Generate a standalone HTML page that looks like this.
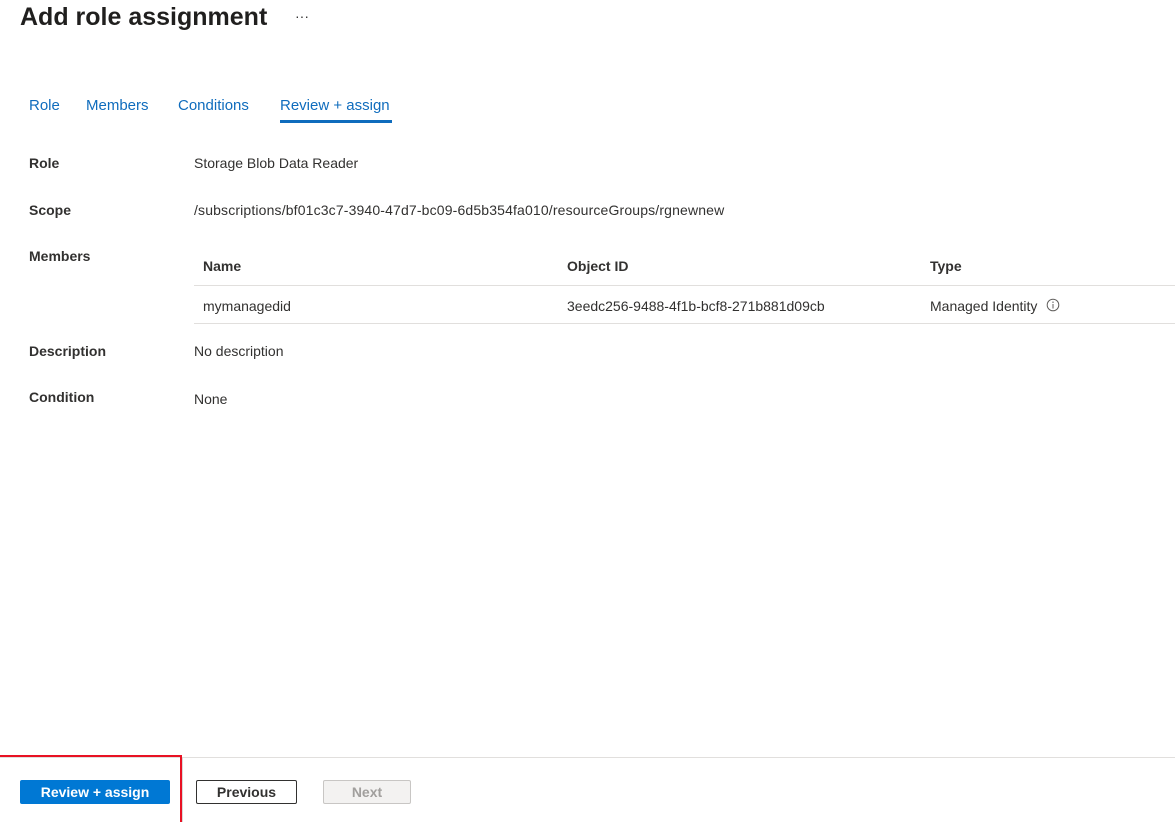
<!DOCTYPE html>
<html style="overflow:hidden;height:822px"><head><style>
body{margin:0;width:1175px;height:822px;background:#fff;font-family:"Liberation Sans",sans-serif;color:#323130;position:relative;overflow:hidden}
.a{position:absolute;white-space:nowrap}
.t{font-size:14px}
.b{font-weight:bold;font-size:14px}
.tab{font-size:15px;color:#0f6cbd;top:97px}
.line{position:absolute;height:1px;background:#e1dfdd}
.btn{position:absolute;top:780px;height:24px;box-sizing:border-box;font-size:14px;font-weight:bold;text-align:center;line-height:22px;border-radius:2px}
</style></head><body>
<div class="a" style="left:20px;top:3px;font-size:25px;color:#201f1e;font-weight:600">Add role assignment</div>
<div class="a" style="left:295px;top:8px;font-size:14px">···</div>
<div class="a tab" style="left:29px">Role</div>
<div class="a tab" style="left:86px">Members</div>
<div class="a tab" style="left:178px">Conditions</div>
<div class="a tab" style="left:280px;color:#0f6cbd">Review + assign</div>
<div style="position:absolute;left:280px;top:120px;width:112px;height:3px;background:#0f6cbd"></div>

<div class="a b" style="left:29px;top:155px">Role</div>
<div class="a t" style="left:194px;top:155px">Storage Blob Data Reader</div>
<div class="a b" style="left:29px;top:202px">Scope</div>
<div class="a t" style="left:194px;top:202px;letter-spacing:0.15px">/subscriptions/bf01c3c7-3940-47d7-bc09-6d5b354fa010/resourceGroups/rgnewnew</div>
<div class="a b" style="left:29px;top:248px">Members</div>
<div class="a b" style="left:203px;top:258px">Name</div>
<div class="a b" style="left:567px;top:258px">Object ID</div>
<div class="a b" style="left:930px;top:258px">Type</div>
<div class="line" style="left:194px;top:285px;width:981px"></div>
<div class="a t" style="left:203px;top:298px">mymanagedid</div>
<div class="a t" style="left:567px;top:298px">3eedc256-9488-4f1b-bcf8-271b881d09cb</div>
<div class="a t" style="left:930px;top:298px">Managed Identity</div>
<svg class="a" style="left:1046px;top:298px" width="14" height="14" viewBox="0 0 14 14"><circle cx="7" cy="7" r="5.8" fill="none" stroke="#605e5c" stroke-width="1"/><line x1="7" y1="6" x2="7" y2="10.5" stroke="#605e5c"/><circle cx="7" cy="4.2" r=".7" fill="#605e5c"/></svg>
<div class="line" style="left:194px;top:323px;width:981px"></div>
<div class="a b" style="left:29px;top:343px">Description</div>
<div class="a t" style="left:194px;top:343px">No description</div>
<div class="a b" style="left:29px;top:389px">Condition</div>
<div class="a t" style="left:194px;top:391px">None</div>

<div class="line" style="left:0;top:757px;width:1175px"></div>
<div style="position:absolute;left:-2px;top:755px;width:180px;height:67px;border:2px solid #e81123;border-bottom:0"></div>
<div style="position:absolute;left:182px;top:757px;width:1px;height:65px;background:#d8d8d8"></div>
<div class="btn" style="left:20px;width:150px;background:#0078d4;color:#fff;line-height:24px">Review + assign</div>
<div class="btn" style="left:196px;width:101px;border:1px solid #323130;color:#323130">Previous</div>
<div class="btn" style="left:323px;width:88px;border:1px solid #c8c6c4;background:#f3f2f1;color:#a19f9d">Next</div>
</body></html>
